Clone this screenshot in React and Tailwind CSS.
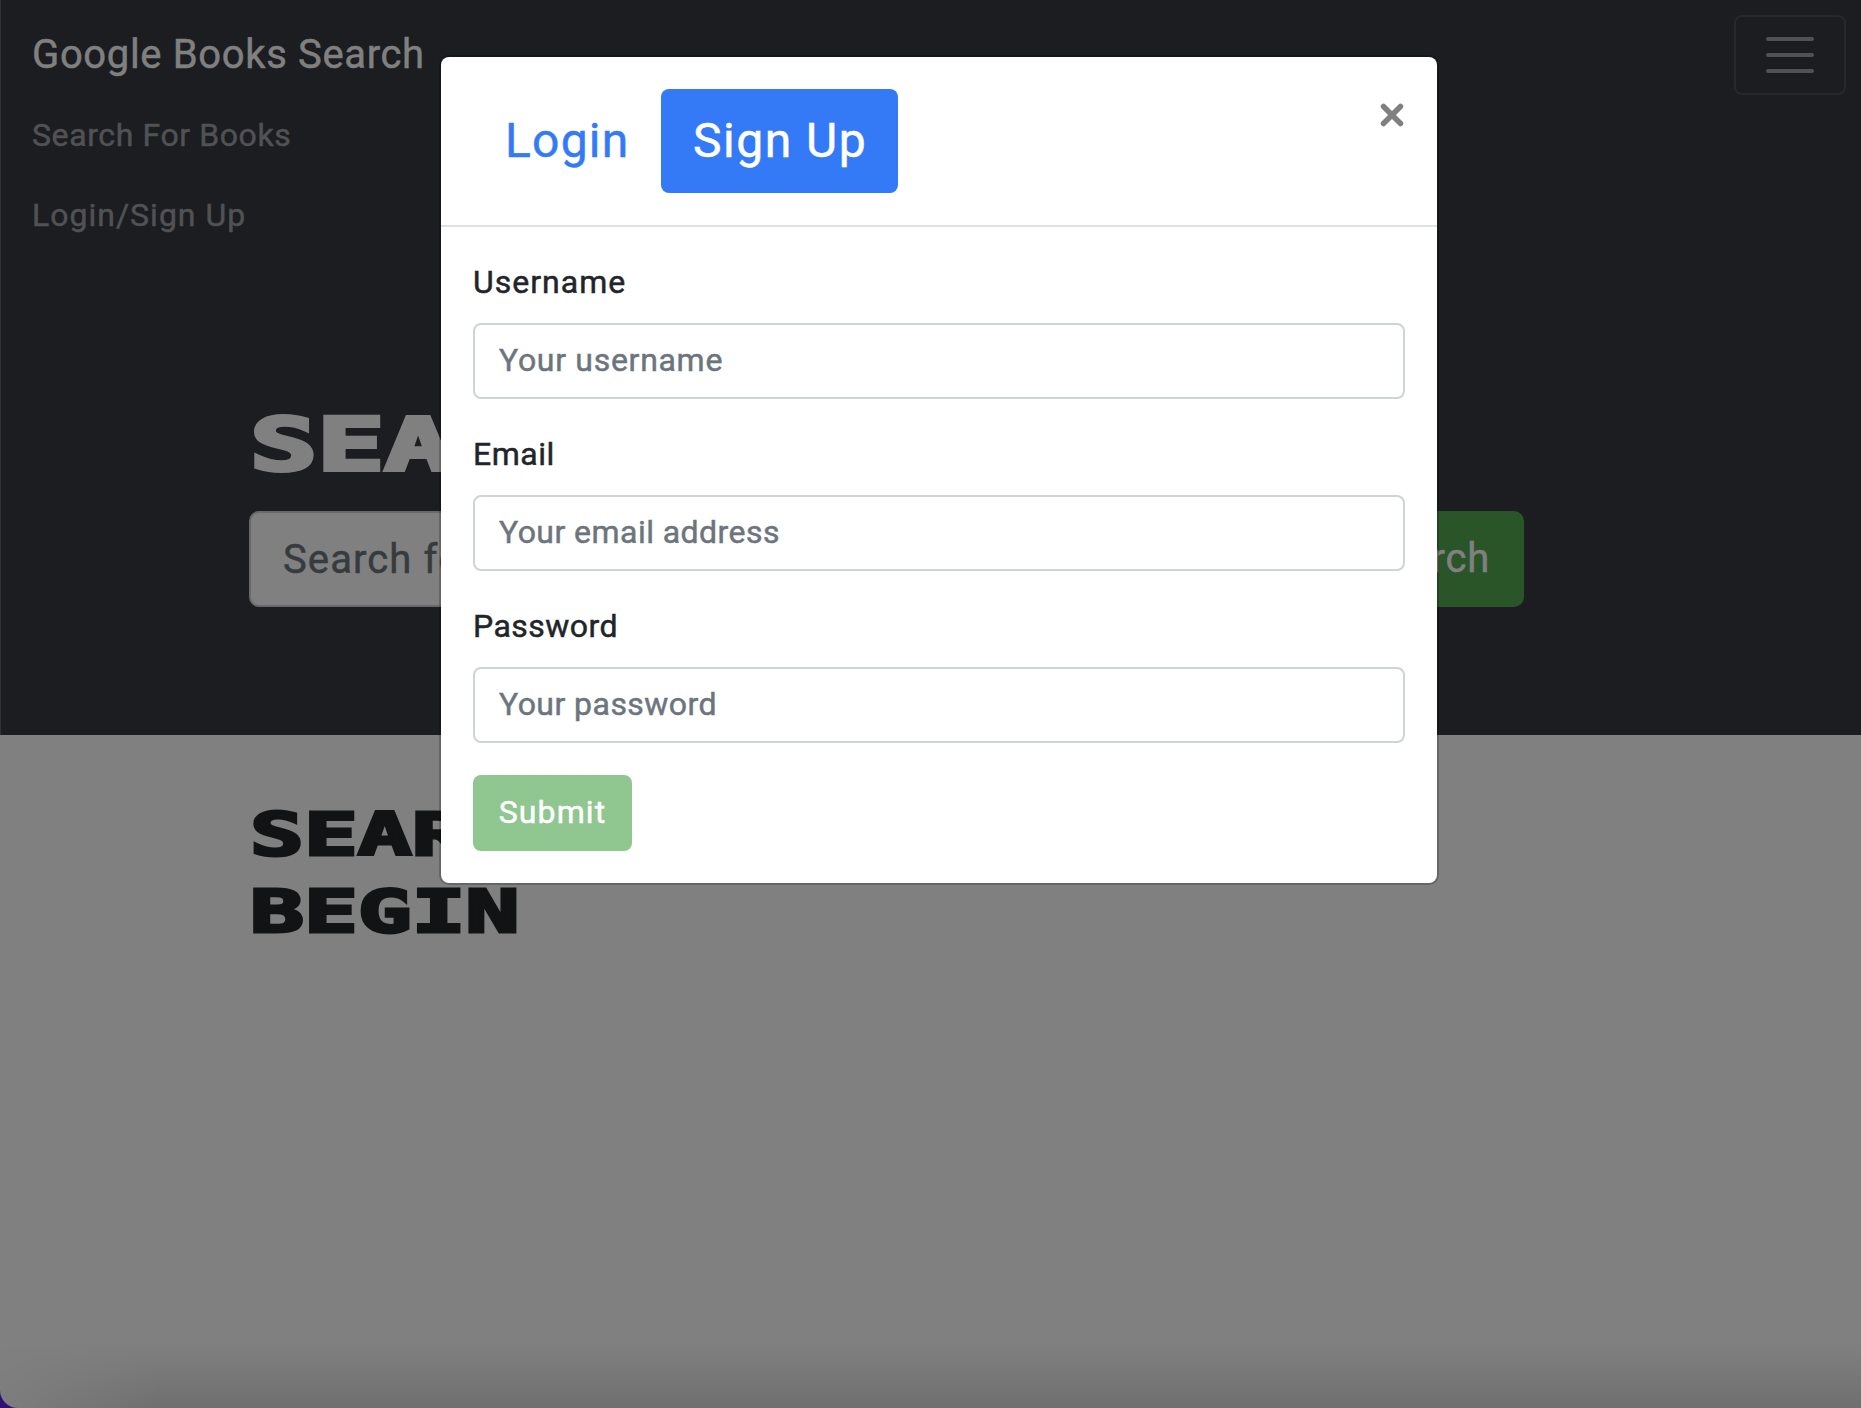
import React from "react";

const mono = "font-['DejaVu_Sans_Mono',monospace] font-bold uppercase whitespace-nowrap origin-left scale-x-[1.53]";

function Field({ label, placeholder, type = "text", labelClass = "", inputClass = "" }) {
  return (
    <div className="mb-8">
      <label className={"mb-4 block h-12 leading-[47px] text-[#212529] " + labelClass}>{label}</label>
      <input
        type={type}
        placeholder={placeholder}
        className={"block h-[76px] w-full rounded-lg border-2 border-[#ced4da] bg-white px-6 pb-0.5 outline-none placeholder:text-[#6c757d] " + inputClass}
      />
    </div>
  );
}

export default function App() {
  return (
    <div className="relative h-[1408px] w-[1861px] overflow-hidden bg-[#2c1176] font-['Roboto',sans-serif] text-[32px] font-normal [-webkit-text-stroke:0.5px]">
      <div className="h-full overflow-hidden rounded-bl-[18px] bg-[#808080]">
        <div className="border-l border-[#2f3235] bg-[#1b1d20]">
          <nav className="flex h-[259px] items-start justify-between pt-[15px] pr-[15px] pl-[31px]">
            <div>
              <div className="h-[77px] text-[40px] leading-[79px] tracking-[0.65px] text-[#808080]">Google Books Search</div>
              <div className="flex flex-col text-[#505254]">
                <a className="h-20 leading-[86px] tracking-[0.6px]">Search For Books</a>
                <a className="h-20 leading-[86px] tracking-[1px]">Login/Sign Up</a>
              </div>
            </div>
            <button className="flex h-20 w-28 flex-col items-center justify-center gap-3 rounded-lg border-2 border-[#26282b]">
              <span className="h-1 w-12 rounded-full bg-[#505254]" />
              <span className="h-1 w-12 rounded-full bg-[#505254]" />
              <span className="h-1 w-12 rounded-full bg-[#505254]" />
            </button>
          </nav>
          <header className="h-[476px] pt-[136px] pr-[337px] pl-[248px]">
            <h1 className={mono + " mb-4 ml-px h-[100px] text-[73px] leading-[100px] text-[#808080] [-webkit-text-stroke:4px_#808080]"}>Search for Books!</h1>
            <form className="flex gap-2.5">
              <input placeholder="Search for a book" className="h-24 w-[840px] rounded-[10px] border-2 border-[#67696c] bg-[#808080] px-8 text-[40px] tracking-[1.1px] outline-none placeholder:text-[#363b3f]" />
              <button type="button" className="h-24 flex-1 rounded-[10px] bg-[#2a5528] pr-[34px] text-right text-[40px] tracking-[0.8px] text-[#808080]">Submit Search</button>
            </form>
          </header>
        </div>
        <main className="pt-[62px] pl-[250px]">
          <h2 className={mono + " text-[58.5px] leading-[77px] text-[#111314] [-webkit-text-stroke:3px_#111314]"}>
            Search for a book to<br />begin
          </h2>
        </main>
      </div>
      <div className="absolute inset-x-0 bottom-0 h-[64px] rounded-bl-[18px] bg-linear-to-b from-transparent to-black/13 [mask-image:linear-gradient(to_right,rgba(0,0,0,0.15),black_160px)]" />

      <section className="absolute top-[57px] left-[441px] w-[996px] rounded-lg bg-white shadow-[0_0_0_2px_rgba(0,0,0,0.2)]">
        <div className="flex h-[170px] items-start justify-between border-b-2 border-[#dee2e6] p-8">
          <div className="flex text-[48px] leading-[104px]">
            <a className="h-[104px] w-[188px] pl-8 tracking-[1.2px] text-[#347af6]">Login</a>
            <a className="h-[104px] w-[237px] rounded-lg bg-[#347af6] pl-8 tracking-[1.5px] text-white">Sign Up</a>
          </div>
          <svg viewBox="0 0 24 24" className="mt-[14px] mr-px h-6 w-6" stroke="#808080" strokeWidth="5.5" strokeLinecap="round">
            <path d="M3.5 3.5 20.5 20.5M20.5 3.5 3.5 20.5" />
          </svg>
        </div>
        <div className="p-8">
          <Field label="Username" placeholder="Your username" labelClass="tracking-[1px]" inputClass="tracking-[0.7px]" />
          <Field label="Email" placeholder="Your email address" labelClass="tracking-[0.5px]" inputClass="tracking-[0.45px]" />
          <Field label="Password" placeholder="Your password" type="password" labelClass="tracking-[0.45px]" inputClass="tracking-[0.45px]" />
          <button className="block h-[76px] w-[159px] rounded-lg bg-[#90c68f] pb-0.5 tracking-[1.1px] text-white">Submit</button>
        </div>
      </section>
    </div>
  );
}
